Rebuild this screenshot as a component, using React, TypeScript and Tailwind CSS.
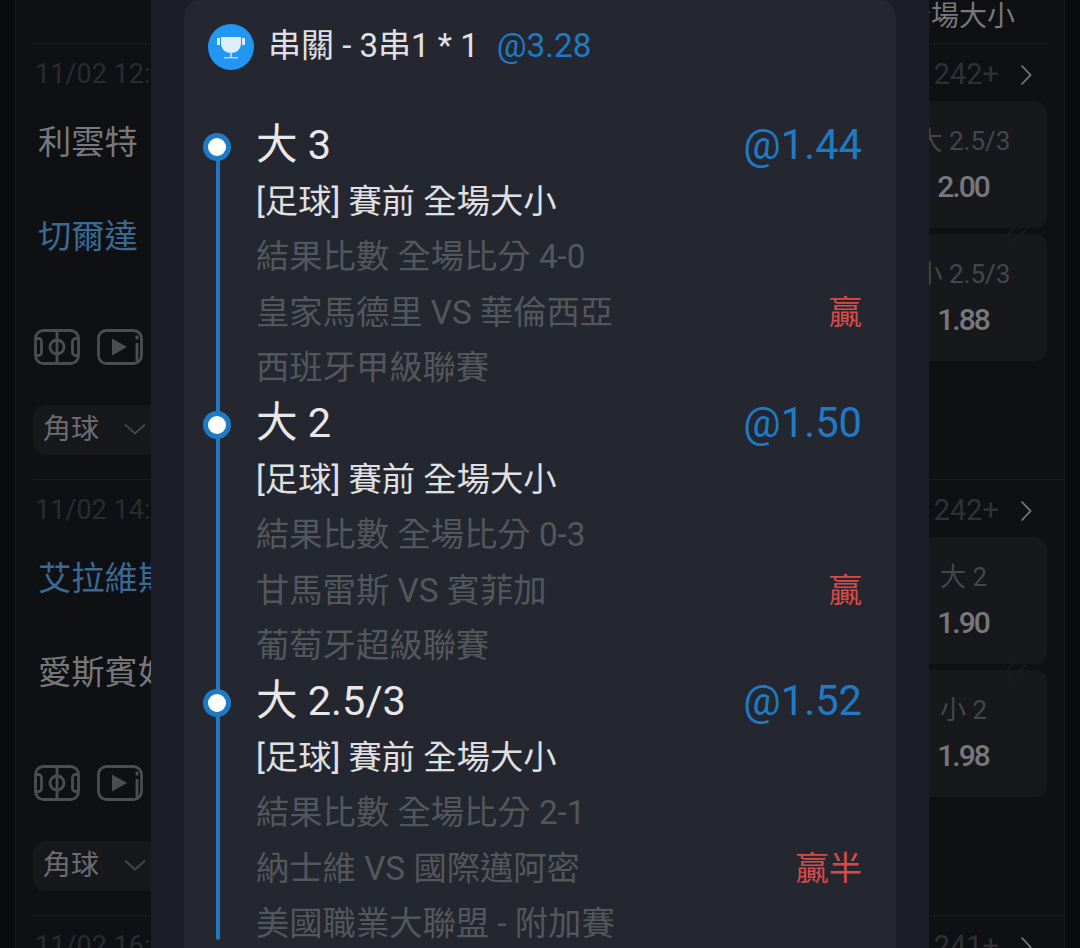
const FONT = "font-['Roboto','Noto_Sans_CJK_TC',sans-serif]";

interface Leg {
  pick: string;
  odds: string;
  score: string;
  teams: string;
  league: string;
  result: string;
}

const LEGS: Leg[] = [
  { pick: "大 3", odds: "@1.44", score: "結果比數 全場比分 4-0", teams: "皇家馬德里 VS 華倫西亞", league: "西班牙甲級聯賽", result: "贏" },
  { pick: "大 2", odds: "@1.50", score: "結果比數 全場比分 0-3", teams: "甘馬雷斯 VS 賓菲加", league: "葡萄牙超級聯賽", result: "贏" },
  { pick: "大 2.5/3", odds: "@1.52", score: "結果比數 全場比分 2-1", teams: "納士維 VS 國際邁阿密", league: "美國職業大聯盟 - 附加賽", result: "贏半" },
];

function FieldIcon() {
  return (
    <svg width="46" height="36" viewBox="0 0 46 36" fill="none" stroke="#4c4d50" strokeWidth="2.8">
      <rect x="1.5" y="1.5" width="43" height="33" rx="8" />
      <path d="M23 1.5v33" />
      <circle cx="23" cy="18" r="7" />
      <path d="M1.5 9.5h3a3 3 0 0 1 3 3v11a3 3 0 0 1-3 3h-3M44.5 9.5h-3a3 3 0 0 0-3 3v11a3 3 0 0 0 3 3h3" />
    </svg>
  );
}

function VideoIcon() {
  return (
    <svg width="46" height="36" viewBox="0 0 46 36" fill="none" stroke="#4c4d50" strokeWidth="2.8">
      <rect x="1.5" y="1.5" width="43" height="33" rx="8" />
      <path d="M15 9.5 30 18 15 26.5Z" fill="#4c4d50" stroke="none" />
      <path d="M40 6.500v4M40 14v20" />
    </svg>
  );
}

function TrophyIcon() {
  return (
    <svg width="46" height="46" viewBox="0 0 46 46">
      <circle cx="23" cy="23" r="23" fill="#2196f3" />
      <path d="M13 13h20v6c0 6-4 10-10 10s-10-4-10-10Z" fill="#dceefc" />
      <path d="M9 14h3v7H9ZM34 14h3v7h-3Z" fill="#dceefc" />
      <path d="M22 29h2v4h-2ZM16 33h14v1.500H16Z" fill="#a9d6fa" />
    </svg>
  );
}

function Chevron() {
  return (
    <svg width="12" height="22" viewBox="0 0 12 22" fill="none" stroke="#75767a" strokeWidth="1.800">
      <path d="M1.500 1.500 10.500 11 1.500 20.500" />
    </svg>
  );
}

function OddsCard({ label, price }: { label: string; price: string }) {
  return (
    <div className="flex h-[127px] w-[166px] flex-col items-center rounded-xl bg-[#17181c]">
      <span className="mt-[20px] pr-[1px] text-[26px] leading-[40px] text-[#45464a]">{label}</span>
      <span className="mt-[6px] pr-[2px] font-medium text-[30px] leading-[40px] tracking-[-2px] text-[#77787b]">{price}</span>
    </div>
  );
}

function MatchRow({ date, count, home, away, homeBlue, cards }: {
  date: string;
  count: string;
  home: string;
  away: string;
  homeBlue?: boolean;
  cards: [string, string][];
}) {
  return (
    <div className="ml-[17px] h-[436px] shrink-0 border-b border-[#1b1c20] pr-[17px]">
      <div className="flex h-[57px] items-center justify-between pt-[4px]">
        <span className="pl-[2px] text-[27px] text-[#2a2b2f]">{date}</span>
        <div className="flex items-center gap-[21px] pr-[15px]">
          <span className="text-[29px] text-[#2f3034]">{count}</span>
          <Chevron />
        </div>
      </div>
      <div className="flex justify-between">
        <div className="flex flex-col">
          <span className={`h-[84px] pl-[5px] text-[33.3px] leading-[84px] ${homeBlue ? "text-[#3a6a92]" : "text-[#77787b]"}`}>{home}</span>
          <span className={`mt-[10px] h-[84px] pl-[5px] text-[33.3px] leading-[84px] ${homeBlue ? "text-[#77787b]" : "text-[#3a6a92]"}`}>{away}</span>
          <div className="mt-[50px] flex gap-[17px] pl-[1px]">
            <FieldIcon />
            <VideoIcon />
          </div>
          <div className="mt-[40px] flex h-[50px] w-[130px] items-center rounded-xl bg-[#17181c] pl-[10px]">
            <span className="text-[28px] text-[#6c6d70]">角球</span>
            <svg className="-mt-[2px] ml-[25px]" width="22" height="12" viewBox="0 0 22 12" fill="none" stroke="#45464a" strokeWidth="1.800">
              <path d="M1 1.500 11 10.500 21 1.500" />
            </svg>
          </div>
        </div>
        <div className="flex flex-col gap-[6px]">
          {cards.map(([label, price]) => (
            <OddsCard key={label} label={label} price={price} />
          ))}
        </div>
      </div>
    </div>
  );
}

function LegBlock({ leg }: { leg: Leg }) {
  return (
    <div className="relative h-[278px] shrink-0 pl-[72px] pr-[34px]">
      <span className="absolute left-[19px] top-[15px] flex h-[28px] w-[28px] items-center justify-center rounded-full bg-[#1f7ac4]">
        <span className="h-[18px] w-[18px] rounded-full bg-white" />
      </span>
      <div className="flex h-[56px] items-center justify-between pb-[1px]">
        <span className="text-[41.5px] text-[#e8e8ea]">{leg.pick}</span>
        <span className="text-[41.7px] text-[#1f7ac4]">{leg.odds}</span>
      </div>
      <div className="h-[55px] text-[33.3px] leading-[55px] text-[#e0e0e2]">[足球] 賽前 全場大小</div>
      <div className="h-[56px] text-[33.3px] leading-[55px] text-[#54565d]">{leg.score}</div>
      <div className="flex h-[55px] items-center justify-between text-[33.3px] text-[#54565d]">
        <span>{leg.teams}</span>
        <span className="text-[#d84a48]">{leg.result}</span>
      </div>
      <div className="h-[56px] text-[33.3px] leading-[55px] text-[#54565d]">{leg.league}</div>
    </div>
  );
}

export default function App() {
  return (
    <div className={`relative h-[948px] w-[1080px] overflow-hidden bg-[#0a0b0d] px-[15px] ${FONT}`}>
      <div className="relative flex h-full flex-col overflow-hidden border-x border-[#17181b] bg-[#0f1014]">
        <div className="ml-[17px] mr-[17px] flex h-[44px] shrink-0 items-start justify-end border-b border-[#1b1c20] pr-[32px]">
          <span className="text-[28px] leading-[34px] text-[#77787b]">全場大小</span>
        </div>
        <MatchRow
          date="11/02 12:30"
          count="242+"
          home="利雲特"
          away="切爾達"
          cards={[["大 2.5/3", "2.00"], ["小 2.5/3", "1.88"]]}
        />
        <MatchRow
          date="11/02 14:30"
          count="242+"
          home="艾拉維斯"
          away="愛斯賓奴"
          homeBlue
          cards={[["大 2", "1.90"], ["小 2", "1.98"]]}
        />
        <MatchRow date="11/02 16:30" count="241+" home="" away="" cards={[]} />
        <svg className="absolute left-[988px] top-[222px]" width="24" height="30" viewBox="0 0 24 30" fill="none" stroke="#1a1b1f" strokeWidth="2">
          <path d="M14 1 2 15l12 14M22 8l-9 7 9 7" />
        </svg>
        <svg className="absolute left-[988px] top-[657px]" width="24" height="30" viewBox="0 0 24 30" fill="none" stroke="#1a1b1f" strokeWidth="2">
          <path d="M14 1 2 15l12 14M22 8l-9 7 9 7" />
        </svg>
      </div>

      <div className="absolute left-[151px] top-0 h-[948px] w-[778px] bg-[#1b1e26] px-[33px]">
        <div className="relative -mt-[2px] h-[960px] rounded-t-[20px] bg-[#252730]">
          <div className="flex items-center pl-[24px] pt-[26px]">
            <TrophyIcon />
            <span className="-mt-[3px] ml-[14px] text-[33px] leading-[46px] text-[#e0e0e2]">串關 - 3串1 * 1</span>
            <span className="-mt-[3px] ml-[18px] text-[33.3px] leading-[46px] text-[#1f7ac4]">@3.28</span>
          </div>
          <span className="absolute left-[32px] top-[149px] h-[793px] w-[4px] rounded-full bg-[#1f78bf]" />
          <div className="mt-[48px] flex flex-col">
            {LEGS.map((leg) => (
              <LegBlock key={leg.pick} leg={leg} />
            ))}
          </div>
        </div>
      </div>
    </div>
  );
}
